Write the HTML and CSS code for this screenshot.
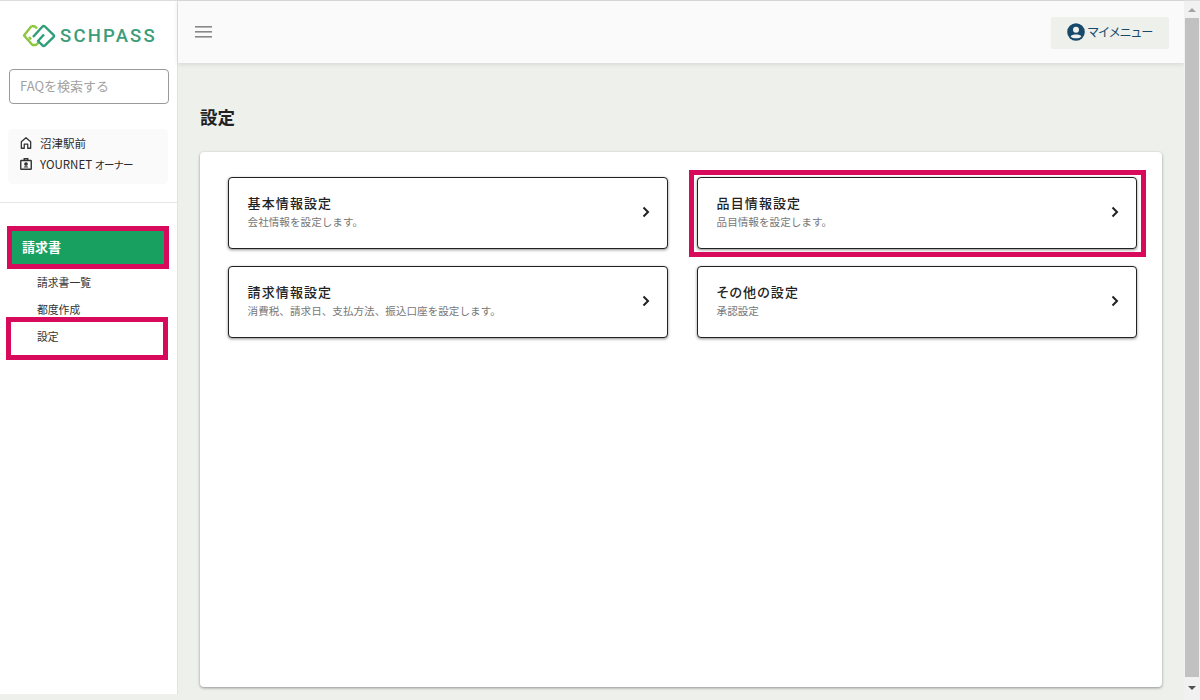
FILE: index.html
```html
<!DOCTYPE html>
<html lang="ja">
<head>
<meta charset="utf-8">
<title>設定</title>
<link rel="stylesheet" href="styles.css">
</head>
<body>
<div class="app">
  <div class="shell">
    <aside class="sidebar">
      <div class="logo">
        <svg class="logo-mark" width="34" height="24" viewBox="0 0 34 24" fill="none">
          <path d="M9.5 2 L2 11.5 L10.5 21 L14 21 L16.5 18.5" stroke="#8dc63f" stroke-width="2.4" stroke-linejoin="round"/>
          <path d="M9.5 2 L13 2.5 L15 4.5" stroke="#8dc63f" stroke-width="2.4" stroke-linejoin="round"/>
          <path d="M7 13 L9 15.5" stroke="#8dc63f" stroke-width="2.4"/>
          <path d="M11 13 L20.5 2.5 C21.2 1.8 22.2 1.8 22.9 2.5 L31.5 10.8 C32.2 11.5 32.2 12.5 31.5 13.2 L23 21.3 C22.3 22 21.2 22 20.5 21.3 L16 17 L22 10.5" stroke="#2f9e77" stroke-width="2.4" stroke-linejoin="round"/>
        </svg>
        <span class="logo-text">SCHPASS</span>
      </div>
      <div class="search"><span class="search-text">FAQを検索する</span></div>
      <div class="user-box">
        <div class="user-row">
          <svg width="14" height="14" viewBox="0 0 24 24" fill="none" stroke="#333" stroke-width="2.2"><path d="M4 21 V10 L12 3 L20 10 V21 H15 V14 H9 V21 Z" stroke-linejoin="round"/></svg>
          <span>沼津駅前</span>
        </div>
        <div class="user-row">
          <svg width="14" height="14" viewBox="0 0 24 24" fill="none" stroke="#333" stroke-width="2.4"><rect x="3" y="6" width="18" height="15" rx="1"/><path d="M9 6 V3 H15 V6"/><circle cx="12" cy="12" r="2" fill="#333"/><path d="M8 18 C8 15 16 15 16 18 Z" fill="#333" stroke="none"/></svg>
          <span>YOURNET <span class="role">オーナー</span></span>
        </div>
      </div>
      <div class="divider"></div>
      <nav class="nav">
        <div class="nav-head">請求書</div>
        <a class="nav-item">請求書一覧</a>
        <a class="nav-item">都度作成</a>
        <a class="nav-item">設定</a>
      </nav>
    </aside>
    <div class="main">
      <header class="topbar">
        <svg class="menu-icon" width="17" height="12" viewBox="0 0 17 12" fill="#888"><rect y="0" width="17" height="1.6"/><rect y="5" width="17" height="1.6"/><rect y="10" width="17" height="1.6"/></svg>
        <div class="my-menu">
          <svg width="18" height="18" viewBox="0 0 18 18"><circle cx="9" cy="9" r="8.8" fill="#17496b"/><circle cx="9" cy="6.8" r="3" fill="#eef0ed"/><path d="M3.6 13.4 C5 10.8 13 10.8 14.4 13.4 C12.5 16 5.5 16 3.6 13.4 Z" fill="#eef0ed"/></svg>
          <span class="palt">マイメニュー</span>
        </div>
      </header>
      <main class="content">
        <h1 class="page-title">設定</h1>
        <section class="panel">
          <div class="card-grid">
            <a class="card"><div class="card-body"><div class="card-title">基本情報設定</div><div class="card-sub">会社情報を設定します。</div></div><svg class="chev" width="8" height="12" viewBox="0 0 8 12" fill="none" stroke="#222" stroke-width="2"><path d="M1.5 1.5 L6 6 L1.5 10.5"/></svg></a>
            <a class="card"><div class="card-body"><div class="card-title">品目情報設定</div><div class="card-sub">品目情報を設定します。</div></div><svg class="chev" width="8" height="12" viewBox="0 0 8 12" fill="none" stroke="#222" stroke-width="2"><path d="M1.5 1.5 L6 6 L1.5 10.5"/></svg></a>
            <a class="card"><div class="card-body"><div class="card-title">請求情報設定</div><div class="card-sub">消費税、請求日、支払方法、振込口座を設定します。</div></div><svg class="chev" width="8" height="12" viewBox="0 0 8 12" fill="none" stroke="#222" stroke-width="2"><path d="M1.5 1.5 L6 6 L1.5 10.5"/></svg></a>
            <a class="card"><div class="card-body"><div class="card-title">その他の設定</div><div class="card-sub">承認設定</div></div><svg class="chev" width="8" height="12" viewBox="0 0 8 12" fill="none" stroke="#222" stroke-width="2"><path d="M1.5 1.5 L6 6 L1.5 10.5"/></svg></a>
          </div>
        </section>
      </main>
    </div>
  </div>
  <div class="scrollbar">
    <div class="arrow-up"></div>
    <div class="thumb"></div>
    <div class="arrow-down"></div>
  </div>
  <div class="mark mark-head"></div>
  <div class="mark mark-setting"></div>
  <div class="mark mark-card"></div>
</div>
</body>
</html>
```
FILE: styles.css
```css
* { box-sizing: border-box; }
html, body { margin: 0; padding: 0; height: 100%; overflow: hidden; }
body { font-family: "Noto Sans CJK JP", "Roboto", sans-serif; color: #222; background: #eef0ec; }
.app { position: relative; display: flex; width: 1200px; height: 700px; border-top: 1px solid #dcdcdc; background: #eef0ec; }
.shell { display: flex; width: 1184px; height: 699px; }
.sidebar { width: 178px; height: 693px; flex: none; background: #fff; border-right: 1px solid #e2e4e1; padding: 0; }
.logo { display: flex; align-items: center; height: 68px; padding: 2px 0 0 22px; gap: 4px; }
.logo-mark { flex: none; }
.logo-text { font-family: "Roboto", sans-serif; font-size: 18.5px; font-weight: 500; letter-spacing: 2.2px; color: #3c9d78; }
.search { margin: 0 9px; height: 35px; width: 160px; border: 1px solid #9a9a9a; border-radius: 4px; padding: 0 0 2px 10px; display: flex; align-items: center; }
.search-text { font-size: 13px; color: #a2a2a2; }
.user-box { margin: 25px 9px 0 8px; height: 55px; background: #fafafa; border-radius: 4px; padding: 3px 0 0 11px; }
.user-row { display: flex; align-items: center; gap: 7px; height: 21px; font-size: 11.5px; color: #2a2a2a; }
.role { font-size: 10.5px; letter-spacing: -1px; }
.palt { font-feature-settings: "palt"; }
.divider { margin-top: 18px; border-top: 1px solid #e6e6e6; }
.nav { margin-top: 28px; }
.nav-head { margin: 0 13px 0 12px; height: 33px; background: #17a060; color: #fff; font-size: 13px; font-weight: 700; padding: 0 0 2px 10px; display: flex; align-items: center; }
.nav-item { display: flex; align-items: center; height: 27px; padding-left: 37px; font-size: 10.8px; color: #333; }
.nav-head + .nav-item { margin-top: 4px; }
.main { flex: 1; min-width: 0; display: flex; flex-direction: column; }
.topbar { height: 62px; flex: none; background: #fafafa; box-shadow: 0 1px 5px rgba(0,0,0,.12); display: flex; align-items: center; justify-content: space-between; padding: 0 15px 0 17px; }
.menu-icon { flex: none; }
.my-menu { display: flex; align-items: center; justify-content: center; gap: 3px; width: 118px; height: 32px; margin-top: 1px; padding: 0 2px 1px 2px; background: #eef0ec; border-radius: 2px; color: #17496b; font-size: 12.2px; }
.content { flex: 1; padding: 0 22px; }
.page-title { margin: 42px 0 0 0; height: 47px; font-size: 17.5px; line-height: 24px; font-weight: 700; color: #222; }
.panel { height: 535px; width: 962px; background: #fff; border-radius: 4px; box-shadow: 0 1px 3px rgba(0,0,0,.4); padding: 25px 25px 0 28px; }
.card-grid { display: grid; grid-template-columns: 440px 440px; column-gap: 29px; row-gap: 17px; }
.card { height: 72px; border: 1px solid #222; border-radius: 4px; background: #fff; box-shadow: 0 1px 3px rgba(0,0,0,.45); display: flex; align-items: center; justify-content: space-between; padding: 0 17px 2px 18.6px; }
.card-body { margin-bottom: 2px; }
.card-title { font-size: 13px; line-height: 17px; font-weight: 500; letter-spacing: 1.1px; color: #222; font-feature-settings: "palt"; margin-bottom: 2px; position: relative; top: -1px; }
.card-sub { font-size: 10.6px; line-height: 15px; color: #777; margin-bottom: -2px; }
.chev { flex: none; }
.scrollbar { width: 16px; height: 699px; background: #f1f1f1; display: flex; flex-direction: column; align-items: center; flex: none; padding-top: 7px; }
.arrow-up { width: 0; height: 0; border-left: 4px solid transparent; border-right: 4px solid transparent; border-bottom: 4px solid #a3a3a3; }
.thumb { width: 14px; height: 659px; margin-top: 6px; background: #c1c1c1; }
.arrow-down { width: 0; height: 0; margin-top: 9px; border-left: 4px solid transparent; border-right: 4px solid transparent; border-top: 4px solid #505050; }
.mark { position: absolute; border: 5px solid #d80a5c; pointer-events: none; }
.mark-head { left: 7px; top: 225px; width: 162px; height: 43px; }
.mark-setting { left: 6px; top: 316px; width: 162px; height: 43px; }
.mark-card { left: 689px; top: 169px; width: 457px; height: 87px; }
```
